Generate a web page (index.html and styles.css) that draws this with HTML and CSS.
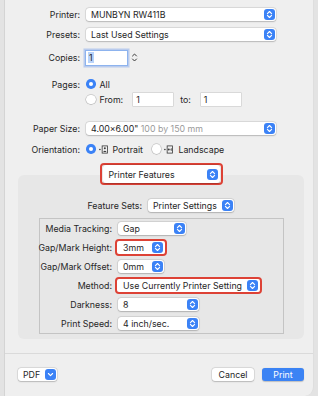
FILE: index.html
```html
<!DOCTYPE html>
<html>
<head>
<meta charset="utf-8">
<link rel="stylesheet" href="styles.css">
</head>
<body>
<div class="dialog">
  <div class="row r-printer">
    <span class="lbl">Printer:</span>
    <div class="pop w-wide"><span>MUNBYN RW411B</span><span class="chev"><svg viewBox="0 0 11 11"><path d="M3.4 4.6L5.5 2.5L7.6 4.6M3.4 6.4L5.5 8.5L7.6 6.4"/></svg></span></div>
  </div>
  <div class="row r-presets">
    <span class="lbl">Presets:</span>
    <div class="pop w-wide"><span>Last Used Settings</span><span class="chev"><svg viewBox="0 0 11 11"><path d="M3.4 4.6L5.5 2.5L7.6 4.6M3.4 6.4L5.5 8.5L7.6 6.4"/></svg></span></div>
  </div>
  <div class="row r-copies">
    <span class="lbl">Copies:</span>
    <div class="field focus"><span class="sel">1</span></div>
    <span class="stepper"><svg viewBox="0 0 9 13"><path d="M2.5 5L4.5 3L6.5 5M2.5 8L4.5 10L6.5 8"/></svg></span>
  </div>
  <div class="row r-pages">
    <span class="lbl">Pages:</span>
    <span class="radio on"></span><span class="rtext">All</span>
  </div>
  <div class="row r-from">
    <span class="lbl"></span>
    <span class="radio"></span><span class="rtext">From:</span>
    <div class="field small f-from">1</div>
    <span class="to">to:</span>
    <div class="field small">1</div>
  </div>
  <div class="row r-paper">
    <span class="lbl">Paper Size:</span>
    <div class="pop w-wide"><span>4.00x6.00" <span class="dim">100 by 150 mm</span></span><span class="chev"><svg viewBox="0 0 11 11"><path d="M3.4 4.6L5.5 2.5L7.6 4.6M3.4 6.4L5.5 8.5L7.6 6.4"/></svg></span></div>
  </div>
  <div class="row r-orient">
    <span class="lbl">Orientation:</span>
    <span class="radio on"></span>
    <svg class="oicon" viewBox="0 0 10 9"><circle cx="1" cy="4.5" r="0.9" class="f"/><rect x="3.5" y="0.5" width="6" height="8" class="s"/><circle cx="6.5" cy="3.2" r="1.1" class="f"/><path d="M4.6 7.2Q6.5 4.4 8.4 7.2Z" class="f"/></svg>
    <span class="otext">Portrait</span>
    <span class="radio r2"></span>
    <svg class="oicon" viewBox="0 0 10 9"><circle cx="1" cy="4.5" r="0.9" class="f"/><rect x="3.5" y="0.5" width="6" height="8" class="s"/><circle cx="5.3" cy="4.5" r="1.1" class="f"/><path d="M8.5 2.7Q5.9 4.5 8.5 6.3Z" class="f"/></svg>
    <span class="otext">Landscape</span>
  </div>

  <div class="tabwrap">
    <div class="hl hl-big"><div class="pop w-pf"><span>Printer Features</span><span class="chev"><svg viewBox="0 0 11 11"><path d="M3.4 4.6L5.5 2.5L7.6 4.6M3.4 6.4L5.5 8.5L7.6 6.4"/></svg></span></div></div>
  </div>
  <div class="group">
    <div class="row r-fs">
      <span class="lbl lbl-fs">Feature Sets:</span>
      <div class="pop w-fs"><span>Printer Settings</span><span class="chev"><svg viewBox="0 0 11 11"><path d="M3.4 4.6L5.5 2.5L7.6 4.6M3.4 6.4L5.5 8.5L7.6 6.4"/></svg></span></div>
    </div>
    <div class="inner">
      <div class="irow">
        <span class="ilbl">Media Tracking:</span>
        <div class="pop w-mt"><span>Gap</span><span class="chev"><svg viewBox="0 0 11 11"><path d="M3.4 4.6L5.5 2.5L7.6 4.6M3.4 6.4L5.5 8.5L7.6 6.4"/></svg></span></div>
      </div>
      <div class="irow">
        <span class="ilbl">Gap/Mark Height:</span>
        <div class="hl hl-sm"><div class="pop w-gm"><span>3mm</span><span class="chev"><svg viewBox="0 0 11 11"><path d="M3.4 4.6L5.5 2.5L7.6 4.6M3.4 6.4L5.5 8.5L7.6 6.4"/></svg></span></div></div>
      </div>
      <div class="irow">
        <span class="ilbl">Gap/Mark Offset:</span>
        <div class="pop w-gm"><span>0mm</span><span class="chev"><svg viewBox="0 0 11 11"><path d="M3.4 4.6L5.5 2.5L7.6 4.6M3.4 6.4L5.5 8.5L7.6 6.4"/></svg></span></div>
      </div>
      <div class="irow">
        <span class="ilbl">Method:</span>
        <div class="hl hl-sm"><div class="pop w-me"><span>Use Currently Printer Setting</span><span class="chev"><svg viewBox="0 0 11 11"><path d="M3.4 4.6L5.5 2.5L7.6 4.6M3.4 6.4L5.5 8.5L7.6 6.4"/></svg></span></div></div>
      </div>
      <div class="irow">
        <span class="ilbl">Darkness:</span>
        <div class="pop w-dk"><span>8</span><span class="chev"><svg viewBox="0 0 11 11"><path d="M3.4 4.6L5.5 2.5L7.6 4.6M3.4 6.4L5.5 8.5L7.6 6.4"/></svg></span></div>
      </div>
      <div class="irow">
        <span class="ilbl">Print Speed:</span>
        <div class="pop w-dk"><span>4 inch/sec.</span><span class="chev"><svg viewBox="0 0 11 11"><path d="M3.4 4.6L5.5 2.5L7.6 4.6M3.4 6.4L5.5 8.5L7.6 6.4"/></svg></span></div>
      </div>
    </div>
  </div>

  <div class="footer">
    <div class="btn pdf"><span>PDF</span><span class="chev"><svg viewBox="0 0 11 11"><path d="M3.4 4.5L5.5 6.6L7.6 4.5"/></svg></span></div>
    <div class="spacer"></div>
    <div class="btn cancel">Cancel</div>
    <div class="btn print">Print</div>
  </div>
</div>
</body>
</html>
```
FILE: styles.css
```css
html, body {
  margin: 0;
  padding: 0;
}
body {
  background: #e3e3e3;
  font-family: Inter, "Liberation Sans", sans-serif;
  font-size: 8.8px;
  color: #262626;
}
.dialog {
  margin-left: 4px;
  width: 310px;
  height: 396px;
  box-sizing: border-box;
  background: #efefef;
  border-left: 1px solid #d4d4d4;
  border-right: 1px solid #dedede;
  border-bottom-right-radius: 9px;
  padding-top: 8px;
  overflow: hidden;
}
.row {
  display: flex;
  align-items: center;
}
.lbl {
  flex: none;
  width: 75px;
  margin-right: 6px;
  display: flex;
  justify-content: flex-end;
  white-space: nowrap;
}
.pop {
  display: flex;
  align-items: center;
  justify-content: space-between;
  height: 13px;
  box-sizing: border-box;
  background: #fff;
  border-radius: 3px;
  padding-left: 5px;
  padding-right: 1px;
  box-shadow: 0 0 0 0.5px rgba(0,0,0,0.13), 0 0.5px 1.5px rgba(0,0,0,0.18);
  white-space: nowrap;
}
.chev {
  flex: none;
  width: 11px;
  height: 11px;
  background: #3b82f6;
  border-radius: 3px;
  display: block;
}
.chev svg {
  display: block;
  width: 11px;
  height: 11px;
}
.chev path {
  fill: none;
  stroke: #fff;
  stroke-width: 1.1;
  stroke-linecap: round;
  stroke-linejoin: round;
}
.w-wide { width: 190px; }
.r-printer { height: 13px; }
.r-presets { height: 13px; margin-top: 7px; }
.r-copies { height: 15px; margin-top: 9px; }
.r-pages { height: 14px; margin-top: 12px; }
.r-from { height: 13px; margin-top: 2px; }
.r-paper { height: 13px; margin-top: 16px; }
.r-orient { height: 14px; margin-top: 7px; }

.field {
  box-sizing: border-box;
  background: #fff;
  height: 14px;
  width: 41px;
  padding-left: 2px;
  display: flex;
  align-items: center;
  box-shadow: 0 0 0 0.5px rgba(0,0,0,0.18);
}
.field.focus {
  box-shadow: 0 0 0 1px #8db3ee, 0 0 0 2.5px rgba(120,160,235,0.45);
}
.sel {
  background: #b8d3fa;
  padding: 0 1px;
  line-height: 11px;
}
.field.small {
  height: 13px;
  width: 40px;
  padding-left: 3px;
}
.stepper {
  margin-left: 3px;
  width: 9px;
  height: 13px;
  display: block;
}
.stepper svg {
  display: block;
  width: 9px;
  height: 13px;
}
.stepper path {
  fill: none;
  stroke: #3a3a3a;
  stroke-width: 1;
  stroke-linecap: round;
  stroke-linejoin: round;
}
.radio {
  flex: none;
  box-sizing: border-box;
  width: 9.5px;
  height: 9.5px;
  border-radius: 50%;
  background: #fff;
  box-shadow: 0 0 0 0.5px rgba(0,0,0,0.25), 0 0.5px 1px rgba(0,0,0,0.12);
}
.radio.on {
  background: #3b82f6;
  box-shadow: none;
  display: flex;
  align-items: center;
  justify-content: center;
}
.radio.on::after {
  content: "";
  display: block;
  width: 4px;
  height: 4px;
  border-radius: 50%;
  background: #fff;
}
.rtext { margin-left: 4px; }
.f-from { margin-left: 10px; }
.to { margin-left: 7px; margin-right: 10px; }
.dim { color: #9a9a9a; }

.oicon {
  flex: none;
  width: 9px;
  height: 9px;
  margin-left: 3px;
  display: block;
}
.oicon .f { fill: #3a3a3a; }
.oicon .s { fill: none; stroke: #3a3a3a; stroke-width: 0.9; }
.otext { margin-left: 5px; }
.radio.r2 { margin-left: 9px; }

.tabwrap {
  display: flex;
  justify-content: center;
  margin-top: 7px;
  margin-left: 13px;
  width: 286px;
  position: relative;
  z-index: 1;
}
.hl {
  border: 2px solid #dd4236;
  border-radius: 4px;
  padding: 0 1px;
  background: #fff;
}
.hl-big .pop { height: 18px; }
.w-pf { width: 117px; padding-left: 6px; padding-right: 2px; }
.hl-sm { margin-left: -3px; }
.hl-sm .pop { box-shadow: none; }

.group {
  margin-top: -10px;
  margin-left: 13px;
  width: 286px;
  height: 164px;
  box-sizing: border-box;
  background: #e7e7e7;
  border-radius: 6px;
  padding-top: 23px;
}
.r-fs { height: 14px; }
.lbl-fs { width: 124px; }
.w-fs { width: 86px; }
.inner {
  margin-top: 6px;
  margin-left: 21px;
  width: 245px;
  box-sizing: border-box;
  border: 1px solid #c4c4c4;
}
.irow {
  display: flex;
  align-items: center;
  height: 19px;
}
.ilbl {
  flex: none;
  width: 72px;
  margin-right: 6px;
  display: flex;
  justify-content: flex-end;
  white-space: nowrap;
}
.w-mt { width: 68px; }
.w-gm { width: 46px; }
.w-me { width: 141px; }
.w-dk { width: 81px; }

.footer {
  margin-top: 14px;
  border-top: 1px solid #dadada;
  padding: 14px 9px 0 13px;
  display: flex;
  align-items: center;
}
.spacer { flex: 1; }
.btn {
  height: 13px;
  box-sizing: border-box;
  background: #fff;
  border-radius: 3px;
  box-shadow: 0 0 0 0.5px rgba(0,0,0,0.13), 0 0.5px 1.5px rgba(0,0,0,0.18);
  display: flex;
  align-items: center;
  justify-content: center;
}
.pdf {
  width: 39px;
  justify-content: space-between;
  padding-left: 5px;
  padding-right: 1px;
}
.cancel { width: 42px; }
.print {
  width: 42px;
  margin-left: 8px;
  background: #3b83f4;
  color: #fff;
  box-shadow: 0 0.5px 1px rgba(0,0,0,0.2);
}
```
